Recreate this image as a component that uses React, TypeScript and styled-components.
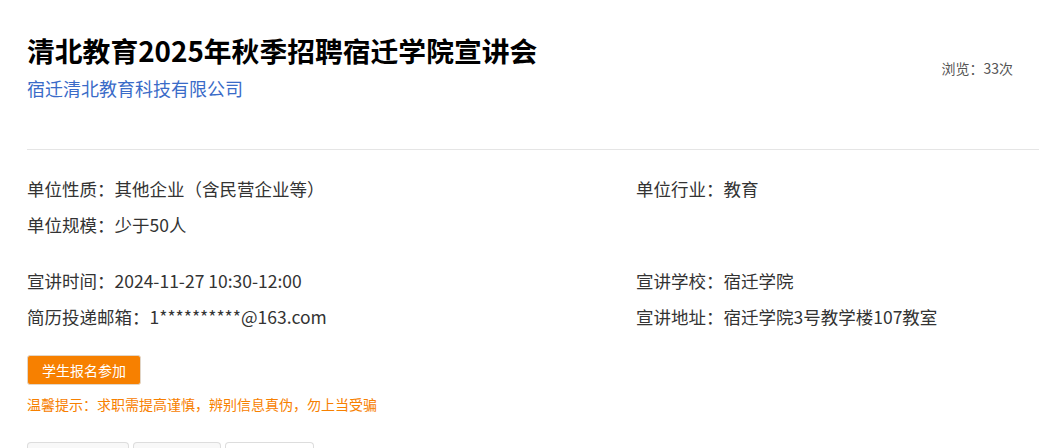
import styled, {createGlobalStyle} from "styled-components";

const GlobalStyle = createGlobalStyle`
	body {
		margin: 0;
		background: #ffffff;
		font-family: "Noto Sans CJK SC", "Noto Sans", sans-serif;
		overflow: hidden;
	}
`;

const Page = styled.div`
	padding: 30px 0 0 27px;
`;
const Header = styled.div`
	display: flex;
	justify-content: space-between;
	align-items: flex-start;
	padding-right: 26px;
	padding-bottom: 47px;
	border-bottom: 1px solid #e5e5e5;
`;
const TitleBlock = styled.div``;
const Title = styled.h1`
	margin: 0;
	font-size: 27.8px;
	line-height: 40px;
	font-weight: 700;
	color: #000000;
`;
const Company = styled.div`
	margin-top: 4px;
	font-size: 18px;
	line-height: 28px;
	color: #3a6bc8;
`;
const Views = styled.div`
	margin-top: 28px;
	font-size: 14px;
	line-height: 20px;
	color: #555555;
`;
const InfoGroup = styled.div<{$top: number}>`
	display: grid;
	grid-template-columns: 609px 1fr;
	margin-top: ${p => p.$top}px;
`;
const InfoItem = styled.div`
	font-size: 17.5px;
	line-height: 36px;
	color: #333333;
	white-space: nowrap;
`;
const ApplyButton = styled.button`
	display: block;
	margin-top: 20px;
	width: 114px;
	height: 30px;
	padding: 0;
	background: #f78000;
	border: 1px solid #e2d6c8;
	border-radius: 3px;
	color: #ffffff;
	font-family: inherit;
	font-size: 14px;
	cursor: pointer;
`;
const Tip = styled.div`
	margin-top: 8px;
	font-size: 14px;
	line-height: 22px;
	color: #f78000;
`;
const Tabs = styled.div`
	display: flex;
	gap: 4px;
	margin-top: 27px;
`;
const Tab = styled.div<{$width: number; $active?: boolean}>`
	width: ${p => p.$width}px;
	height: 30px;
	box-sizing: border-box;
	border: 1px solid #dddddd;
	border-bottom: none;
	border-radius: 4px 4px 0 0;
	background: ${p => (p.$active ? "#ffffff" : "#f8f8f8")};
`;

const groups = [
	[
		["单位性质", "其他企业（含民营企业等）"],
		["单位行业", "教育"],
		["单位规模", "少于50人"],
		null,
	],
	[
		["宣讲时间", "2024-11-27 10:30-12:00"],
		["宣讲学校", "宿迁学院"],
		["简历投递邮箱", "1**********@163.com"],
		["宣讲地址", "宿迁学院3号教学楼107教室"],
	],
];

export default function App() {
	return (
		<>
			<GlobalStyle/>
			<Page>
				<Header>
					<TitleBlock>
						<Title>清北教育2025年秋季招聘宿迁学院宣讲会</Title>
						<Company>宿迁清北教育科技有限公司</Company>
					</TitleBlock>
					<Views>浏览：33次</Views>
				</Header>
				{groups.map((g, i) => (
					<InfoGroup key={i} $top={i === 0 ? 21 : 20}>
						{g.map((item, j) => (
							<InfoItem key={j}>{item ? `${item[0]}：${item[1]}` : ""}</InfoItem>
						))}
					</InfoGroup>
				))}
				<ApplyButton>学生报名参加</ApplyButton>
				<Tip>温馨提示：求职需提高谨慎，辨别信息真伪，勿上当受骗</Tip>
				<Tabs>
					<Tab $width={102}/>
					<Tab $width={88}/>
					<Tab $width={89} $active/>
				</Tabs>
			</Page>
		</>
	);
}
